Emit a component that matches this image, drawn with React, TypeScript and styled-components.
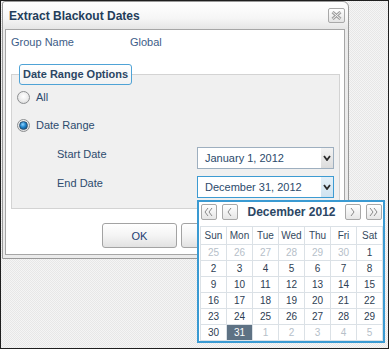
import React from "react";
import styled, { createGlobalStyle } from "styled-components";

const GlobalStyle = createGlobalStyle`
  html, body { margin: 0; padding: 0; }
  body { font-family: "Liberation Sans", Arial, sans-serif; }
  * { box-sizing: border-box; }
`;

const Screen = styled.div`
  position: relative;
  width: 389px;
  height: 349px;
  border: 1px solid #1f1f1f;
  background: repeating-conic-gradient(#f5f5f5 0 25%, #e7e7e7 0 50%) 0 0 / 2px 2px;
  overflow: hidden;
`;

const Dialog = styled.div`
  margin-left: 1px;
  width: 347px;
  height: 258px;
  border: 1px solid #9a9a9a;
  border-radius: 3px 6px 0 0;
  background: #ebebeb;
  display: flex;
  flex-direction: column;
`;

const TitleBar = styled.div`
  height: 27px;
  flex: none;
  display: flex;
  align-items: center;
  justify-content: space-between;
  padding: 0 3px 0 6px;
  background: linear-gradient(#ffffff 0%, #f6f6f6 60%, #e6e6e6 100%);
  border-radius: 3px 6px 0 0;
`;

const Title = styled.span`
  font-size: 12px;
  font-weight: bold;
  color: #233d5a;
`;

const CloseButton = styled.div`
  width: 17px;
  height: 15px;
  border: 1px solid #a9a9a9;
  border-radius: 2px;
  background: linear-gradient(#ffffff, #e4e4e4);
  display: flex;
  align-items: center;
  justify-content: center;
`;

const DialogBody = styled.div`
  padding: 0 3px 3px 2px;
`;

const Panel = styled.div`
  border: 1px solid #a6a6a6;
  background: #ffffff;
  padding: 5px 4px 6px 5px;
`;

const InfoRow = styled.div`
  display: flex;
  height: 14px;
  line-height: 14px;
  font-size: 11px;
  color: #3d5d88;
`;

const InfoLabel = styled.span`
  width: 119px;
`;

const Fieldset = styled.fieldset`
  margin: 15px 0 0 0;
  padding: 0 0 10px 5px;
  border: 1px solid #d3d3d3;
  background: #f0f0f0;
  min-width: 0;
`;

const Legend = styled.legend`
  margin-left: 2px;
  padding: 0 3px;
  height: 21px;
  line-height: 19px;
  border: 1px solid #4fa3d6;
  border-radius: 3px;
  background: linear-gradient(#ffffff, #f2f2f2);
  font-size: 11px;
  font-weight: bold;
  color: #2b4664;
`;

const RadioGroup = styled.div`
  display: flex;
  flex-direction: column;
  gap: 6px;
  padding-top: 1px;
`;

const RadioRow = styled.label`
  display: flex;
  align-items: center;
  gap: 6px;
  height: 22px;
  font-size: 11px;
  color: #2d4b6e;
`;

const RadioCircle = styled.span<{ $checked?: boolean }>`
  width: 13px;
  height: 13px;
  border-radius: 50%;
  border: 1px solid #8d8f91;
  background: radial-gradient(circle at 50% 40%, #ffffff 0%, #ececec 55%, #cfcfcf 100%);
  display: flex;
  align-items: center;
  justify-content: center;
  &::after {
    content: "";
    display: ${(p) => (p.$checked ? "block" : "none")};
    width: 7px;
    height: 7px;
    border-radius: 50%;
    border: 1px solid #2a4f70;
    background: radial-gradient(circle at 40% 35%, #8fd3ff 0%, #1e84cc 45%, #0a3c6e 100%);
  }
`;

const DateGroup = styled.div`
  display: flex;
  flex-direction: column;
  gap: 7px;
  margin-top: 11px;
  padding-left: 40px;
`;

const DateRow = styled.div`
  display: flex;
  align-items: flex-start;
  height: 22px;
  font-size: 11px;
  color: #2d4b6e;
`;

const DateLabel = styled.span`
  width: 140px;
  line-height: 14px;
`;

const DateInput = styled.div<{ $focused?: boolean }>`
  width: 137px;
  height: 22px;
  border: 1px solid ${(p) => (p.$focused ? "#3d9bd2" : "#9eafbf")};
  background: #ffffff;
  display: flex;
  align-items: center;
`;

const DateValue = styled.span`
  flex: 1;
  padding-left: 7px;
  font-size: 11px;
  color: #2b4a6b;
`;

const DropButton = styled.span<{ $focused?: boolean }>`
  width: 12px;
  height: 100%;
  display: flex;
  align-items: center;
  justify-content: center;
  background: ${(p) =>
    p.$focused ? "linear-gradient(#e4f0f8, #cfe3f0)" : "linear-gradient(#f3f3f3, #dcdcdc)"};
`;

const ButtonRow = styled.div`
  display: flex;
  gap: 4px;
  margin-top: 14px;
  padding-left: 91px;
`;

const Button = styled.div`
  width: 75px;
  height: 25px;
  border: 1px solid #a3a3a3;
  border-radius: 3px;
  background: linear-gradient(#ffffff 0%, #f4f4f4 50%, #e2e2e2 100%);
  display: flex;
  align-items: center;
  justify-content: center;
  font-size: 11px;
  color: #1d3f73;
`;

const Calendar = styled.div`
  position: absolute;
  left: 196px;
  top: 199px;
  width: 188px;
  height: 143px;
  border: 2px solid #3a9ad2;
  background: #ffffff;
`;

const NavRow = styled.div`
  height: 24px;
  display: flex;
  align-items: flex-start;
  gap: 5px;
  padding: 2px 1px 0 2px;
`;

const NavButton = styled.div`
  width: 16px;
  height: 16px;
  border: 1px solid #a8a8a8;
  border-radius: 2px;
  background: linear-gradient(#ffffff, #e6e6e6);
  display: flex;
  align-items: center;
  justify-content: center;
`;

const MonthTitle = styled.div`
  flex: 1;
  text-align: center;
  line-height: 16px;
  font-size: 12px;
  font-weight: bold;
  color: #2b4664;
`;

const Grid = styled.div`
  margin-left: 1px;
  width: 183px;
  display: grid;
  grid-template-columns: repeat(7, 25px);
  grid-template-rows: 17px repeat(6, 15px);
  gap: 1px;
  padding: 1px;
  background: #dbe1e6;
`;

const HeadCell = styled.div`
  background: #ffffff;
  display: flex;
  align-items: center;
  justify-content: center;
  font-size: 10px;
  color: #34495e;
`;

const DayCell = styled.div<{ $muted?: boolean; $selected?: boolean }>`
  background: ${(p) => (p.$selected ? "#5e7284" : "#ffffff")};
  display: flex;
  align-items: center;
  justify-content: center;
  font-size: 10px;
  color: ${(p) => (p.$selected ? "#ffffff" : p.$muted ? "#b6c0c9" : "#2e4053")};
`;

const Chevron = ({ dir, double }: { dir: "l" | "r"; double?: boolean }) => {
  const one = (x: number) =>
    dir === "l" ? `M${x + 3} 3 L${x} 7 L${x + 3} 11` : `M${x} 3 L${x + 3} 7 L${x} 11`;
  return (
    <svg width="14" height="14" viewBox="0 0 14 14">
      <path
        d={double ? `${one(3)} ${one(7)}` : one(5)}
        fill="none"
        stroke="#8a8a8a"
        strokeWidth="1"
      />
    </svg>
  );
};

const DownArrow = () => (
  <svg width="8" height="6" viewBox="0 0 8 6">
    <path d="M1 1 L4 5 L7 1" fill="none" stroke="#2b2b2b" strokeWidth="1.8" />
  </svg>
);

const CloseIcon = () => (
  <svg width="11" height="9" viewBox="0 0 11 9">
    <path d="M1.5 1 L9.5 8 M9.5 1 L1.5 8" stroke="#a0a0a0" strokeWidth="3" />
    <path d="M1.5 1 L9.5 8 M9.5 1 L1.5 8" stroke="#f6f6f6" strokeWidth="1" />
  </svg>
);

type Day = { n: number; muted?: boolean; selected?: boolean };

const weeks: Day[][] = [
  [25, 26, 27, 28, 29, 30].map((n) => ({ n, muted: true })).concat([{ n: 1 }]),
  [2, 3, 4, 5, 6, 7, 8].map((n) => ({ n })),
  [9, 10, 11, 12, 13, 14, 15].map((n) => ({ n })),
  [16, 17, 18, 19, 20, 21, 22].map((n) => ({ n })),
  [23, 24, 25, 26, 27, 28, 29].map((n) => ({ n })),
  [{ n: 30 }, { n: 31, selected: true }].concat([1, 2, 3, 4, 5].map((n) => ({ n, muted: true }))),
];

const dayNames = ["Sun", "Mon", "Tue", "Wed", "Thu", "Fri", "Sat"];

export default function App() {
  return (
    <>
      <GlobalStyle />
      <Screen>
        <Dialog>
          <TitleBar>
            <Title>Extract Blackout Dates</Title>
            <CloseButton>
              <CloseIcon />
            </CloseButton>
          </TitleBar>
          <DialogBody>
            <Panel>
              <InfoRow>
                <InfoLabel>Group Name</InfoLabel>
                <span>Global</span>
              </InfoRow>
              <Fieldset>
                <Legend>Date Range Options</Legend>
                <RadioGroup>
                  <RadioRow>
                    <RadioCircle />
                    All
                  </RadioRow>
                  <RadioRow>
                    <RadioCircle $checked />
                    Date Range
                  </RadioRow>
                </RadioGroup>
                <DateGroup>
                  <DateRow>
                    <DateLabel>Start Date</DateLabel>
                    <DateInput>
                      <DateValue>January 1, 2012</DateValue>
                      <DropButton>
                        <DownArrow />
                      </DropButton>
                    </DateInput>
                  </DateRow>
                  <DateRow>
                    <DateLabel>End Date</DateLabel>
                    <DateInput $focused>
                      <DateValue>December 31, 2012</DateValue>
                      <DropButton $focused>
                        <DownArrow />
                      </DropButton>
                    </DateInput>
                  </DateRow>
                </DateGroup>
              </Fieldset>
              <ButtonRow>
                <Button>OK</Button>
                <Button>Cancel</Button>
              </ButtonRow>
            </Panel>
          </DialogBody>
        </Dialog>
        <Calendar>
          <NavRow>
            <NavButton>
              <Chevron dir="l" double />
            </NavButton>
            <NavButton>
              <Chevron dir="l" />
            </NavButton>
            <MonthTitle>December 2012</MonthTitle>
            <NavButton>
              <Chevron dir="r" />
            </NavButton>
            <NavButton>
              <Chevron dir="r" double />
            </NavButton>
          </NavRow>
          <Grid>
            {dayNames.map((d) => (
              <HeadCell key={d}>{d}</HeadCell>
            ))}
            {weeks.map((w, wi) =>
              w.map((d, di) => (
                <DayCell key={`${wi}-${di}`} $muted={d.muted} $selected={d.selected}>
                  {d.n}
                </DayCell>
              ))
            )}
          </Grid>
        </Calendar>
      </Screen>
    </>
  );
}
